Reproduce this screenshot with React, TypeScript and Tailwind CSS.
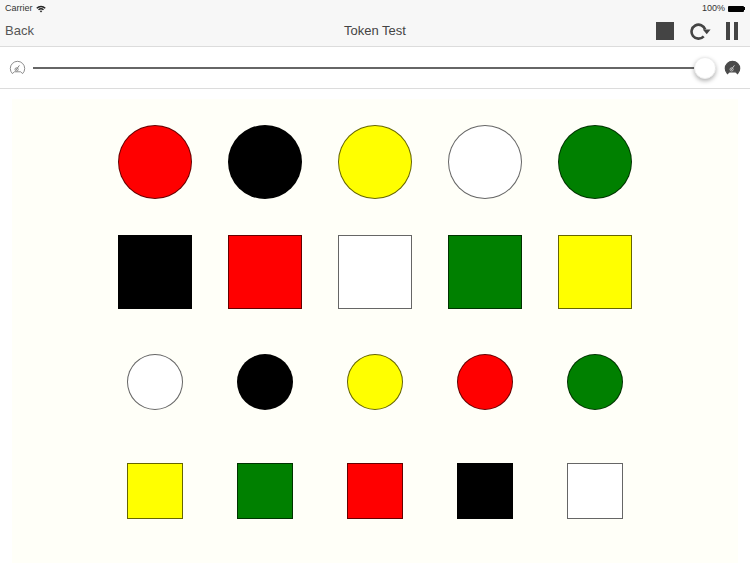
import React from "react";

type Token = { color: string; round?: boolean };

const rows: { size: string; mt: string; items: Token[] }[] = [
  {
    size: "w-[74px] h-[74px]",
    mt: "mt-[26px]",
    items: [
      { color: "bg-[#ff0000]", round: true },
      { color: "bg-black", round: true },
      { color: "bg-[#ffff00]", round: true },
      { color: "bg-white", round: true },
      { color: "bg-[#008000]", round: true },
    ],
  },
  {
    size: "w-[74px] h-[74px]",
    mt: "mt-[36px]",
    items: [
      { color: "bg-black" },
      { color: "bg-[#ff0000]" },
      { color: "bg-white" },
      { color: "bg-[#008000]" },
      { color: "bg-[#ffff00]" },
    ],
  },
  {
    size: "w-[56px] h-[56px]",
    mt: "mt-[45px]",
    items: [
      { color: "bg-white", round: true },
      { color: "bg-black", round: true },
      { color: "bg-[#ffff00]", round: true },
      { color: "bg-[#ff0000]", round: true },
      { color: "bg-[#008000]", round: true },
    ],
  },
  {
    size: "w-[56px] h-[56px]",
    mt: "mt-[53px]",
    items: [
      { color: "bg-[#ffff00]" },
      { color: "bg-[#008000]" },
      { color: "bg-[#ff0000]" },
      { color: "bg-black" },
      { color: "bg-white" },
    ],
  },
];

function Gauge({ filled }: { filled?: boolean }) {
  const dark = "#4a4a4a";
  return (
    <svg width="17" height="15" viewBox="0 0 17 15" fill="none">
      <path
        d="M3.4 13.6 A7.2 7.2 0 1 1 13.6 13.6 L11.6 11.8 H5.4 Z"
        fill={filled ? dark : "none"}
        stroke={filled ? dark : "#808080"}
        strokeWidth={filled ? 1.2 : 0.9}
      />
      <path d="M7 10 L10.4 5.4" stroke={filled ? "#c8c8c8" : "#808080"} strokeWidth="1" />
      <circle cx="7.6" cy="9.4" r="1.6" fill="none" stroke={filled ? "#c8c8c8" : "#808080"} strokeWidth="0.9" />
    </svg>
  );
}

export default function App() {
  return (
    <div className="w-[750px] h-[563px] overflow-hidden bg-white font-['Liberation_Sans',sans-serif] flex flex-col">
      {/* top bars */}
      <div className="h-[47px] bg-[#f7f7f7] border-b border-[#dcdcdc] flex flex-col shrink-0">
        <div className="h-[16px] pt-[1px] pl-[5px] pr-[5px] flex items-center justify-between text-[9px] text-[#333]">
          <div className="flex items-center gap-[3px]">
            <span>Carrier</span>
            <svg width="10" height="8" viewBox="0 0 11 8">
              <path d="M0.3 2.6 A7.4 7.4 0 0 1 10.7 2.6 L9.6 3.7 A5.9 5.9 0 0 0 1.4 3.7 Z" fill="#222" />
              <path d="M2.2 4.4 A4.7 4.7 0 0 1 8.8 4.4 L7.7 5.5 A3.2 3.2 0 0 0 3.3 5.5 Z" fill="#222" />
              <path d="M4.1 6.3 A2 2 0 0 1 6.9 6.3 L5.5 7.8 Z" fill="#222" />
            </svg>
          </div>
          <div className="flex items-center gap-[3px]">
            <span>100%</span>
            <div className="flex items-center">
              <div className="w-[16px] h-[6px] bg-black rounded-[1px]" />
              <div className="w-[1px] h-[3px] bg-black" />
            </div>
          </div>
        </div>
        <div className="relative flex-1 flex items-center justify-between pl-[5px] pr-[12px]">
          <span className="text-[13px] text-[#555]">Back</span>
          <span className="absolute left-0 right-0 text-center text-[13px] text-[#444]">Token Test</span>
          <div className="flex items-center">
            <div className="w-[18px] h-[18px] bg-[#444]" />
            <svg className="ml-[16px]" width="21" height="19" viewBox="0 0 21 19" fill="none">
              <path d="M13.7 14.4 A7 7 0 1 1 15.2 7.5" stroke="#444" strokeWidth="2.6" />
              <path d="M12.8 7.6 H20.6 L16.7 12.2 Z" fill="#444" />
            </svg>
            <div className="ml-[15px] flex gap-[4px]">
              <div className="w-[4px] h-[18px] bg-[#444]" />
              <div className="w-[4px] h-[18px] bg-[#444]" />
            </div>
          </div>
        </div>
      </div>

      {/* speed slider */}
      <div className="h-[42px] border-b border-[#dcdcdc] flex items-center pl-[9px] pr-[9px] shrink-0">
        <Gauge />
        <div className="relative flex-1 ml-[7px] mr-[8px] h-[2px] bg-[#666]">
          <div className="absolute right-0 top-[-10px] w-[22px] h-[22px] rounded-full bg-white shadow-[0_2px_4px_rgba(0,0,0,0.3)] border border-[#eee]" />
        </div>
        <Gauge filled />
      </div>

      {/* tokens */}
      <div className="mt-[10px] mx-[12px] flex-1 bg-[#fffff8] flex flex-col items-center">
        {rows.map((row, i) => (
          <div key={i} className={`${row.mt} grid grid-cols-[repeat(5,110px)] justify-center justify-items-center`}>
            {row.items.map((t, j) => (
              <div
                key={j}
                className={`${row.size} ${t.color} ${t.round ? "rounded-full" : ""} border border-black/60`}
              />
            ))}
          </div>
        ))}
      </div>
    </div>
  );
}
